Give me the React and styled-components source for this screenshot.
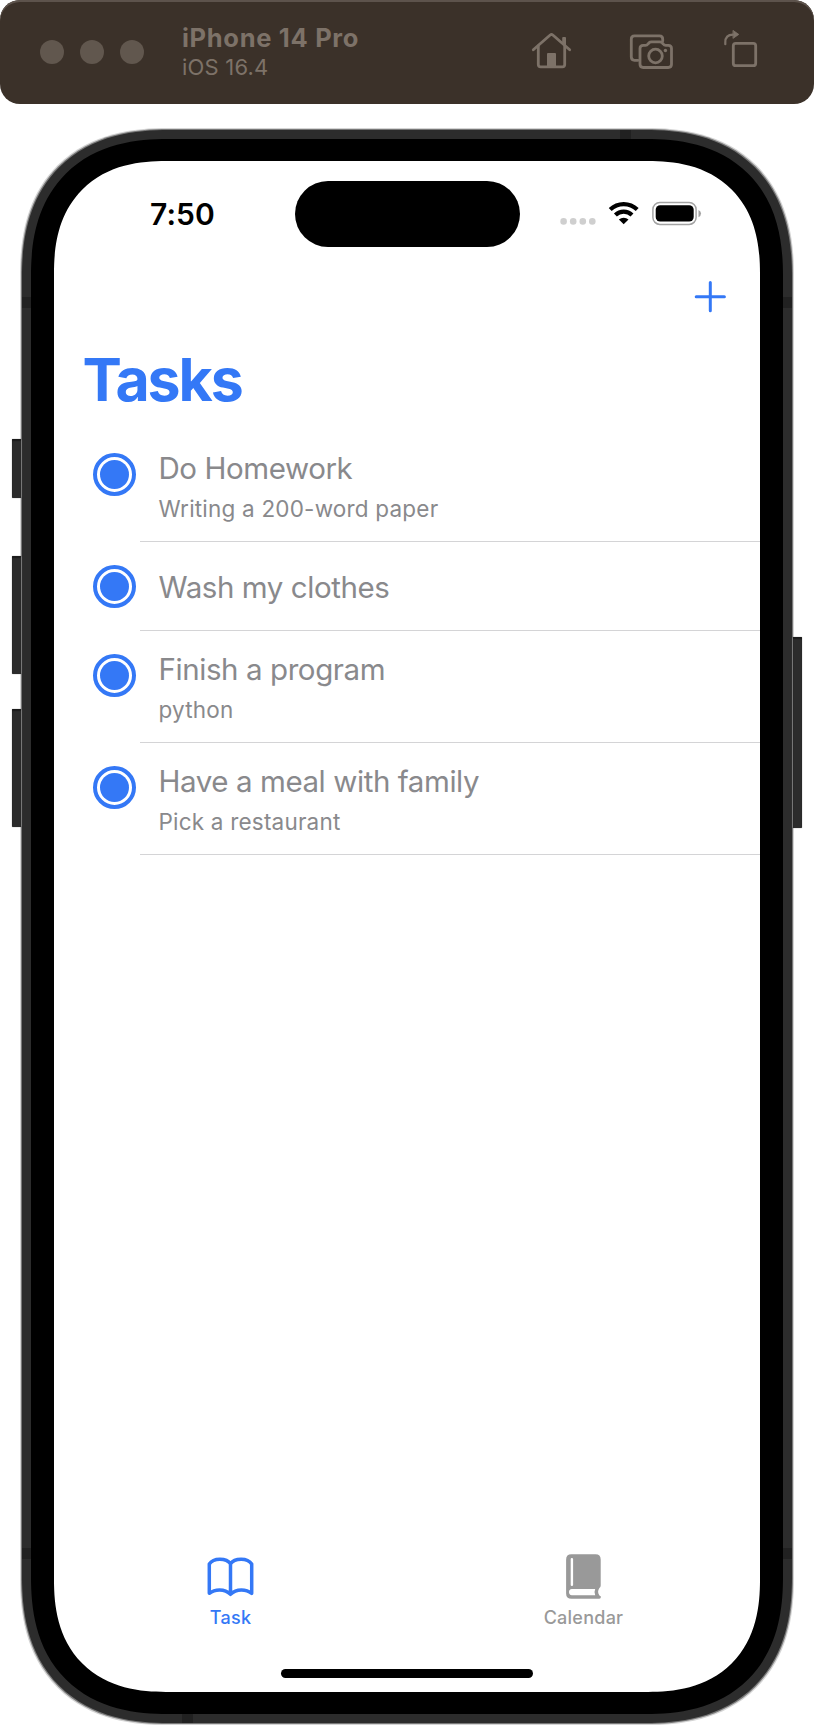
import React from "react";
import styled, { createGlobalStyle } from "styled-components";

const Global = createGlobalStyle`
  *, *::before, *::after { box-sizing: border-box; }
  body { margin: 0; background: #fff; font-family: Inter, "Liberation Sans", sans-serif; }
  svg { display: block; }
`;

const BLUE = "#3478f6";

const Page = styled.div`
  width: 814px;
  height: 1730px;
  overflow: hidden;
`;

const TitleBar = styled.header`
  display: flex;
  align-items: center;
  height: 104px;
  padding: 0 54px 0 40px;
  border-radius: 20px;
  background: #3b3129;
  box-shadow: inset 0 2px 0 #5d534c;
  color: #7d7268;
`;

const Lights = styled.div`
  display: flex;
  gap: 16px;
  margin-right: 38px;
`;

const Light = styled.span`
  width: 24px;
  height: 24px;
  border-radius: 50%;
  background: #61574e;
`;

const Device = styled.div`
  flex: 1;
  padding-top: 3px;
  white-space: nowrap;
`;

const DeviceName = styled.div`
  font-size: 25.5px;
  font-weight: 700;
  line-height: 28px;
  letter-spacing: 0.68px;
`;

const DeviceOs = styled.div`
  font-size: 22px;
  line-height: 31px;
  letter-spacing: 0.2px;
`;

const Tools = styled.div`
  display: flex;
  align-items: center;
`;

/* Continuous (squircle) corners, with plain circular ones as the fallback. */
const Phone = styled.div`
  position: relative;
  width: 770px;
  height: 1593px;
  margin: 26px 0 0 22px;
  padding: 9px;
  border-radius: 128px;
  background: #2c2c2c;
  box-shadow: 0 0 0 1px #777, 0 0 0 2px #d4d4d4;

  @supports (corner-shape: superellipse(1.245)) {
    border-radius: 147px;
    corner-shape: superellipse(1.245);
  }
`;

const SideButton = styled.span`
  position: absolute;
  top: ${(p) => p.$top}px;
  height: ${(p) => p.$height}px;
  width: 10px;
  ${(p) => (p.$right ? "right: -10px;" : "left: -10px;")}
  border-radius: 1px;
  background: #2c2c2c;
  box-shadow: inset 0 2px 1px #1c1c1c, 0 0 1px #555;
  border-${(p) => (p.$right ? "left" : "right")}: 1px solid #777;
`;

const Antenna = styled.span`
  position: absolute;
  top: ${(p) => p.$top}px;
  left: ${(p) => p.$left}px;
  width: ${(p) => (p.$vertical ? 9 : 11)}px;
  height: ${(p) => (p.$vertical ? 11 : 9)}px;
  background: #212121;
`;

const Bezel = styled.div`
  height: 100%;
  padding: 22px 23px;
  border-radius: 119px;
  background: #000;

  @supports (corner-shape: superellipse(1.245)) {
    border-radius: 137px;
    corner-shape: superellipse(1.245);
  }
`;

const Screen = styled.main`
  display: flex;
  flex-direction: column;
  height: 100%;
  border-radius: 97px;
  background: #fff;
  overflow: hidden;

  @supports (corner-shape: superellipse(1.245)) {
    border-radius: 112px;
    corner-shape: superellipse(1.245);
  }
`;

const StatusBar = styled.div`
  display: grid;
  grid-template-columns: 240.5px 225px 240.5px;
  align-items: center;
  height: 66px;
  margin-top: 20px;
`;

const Clock = styled.time`
  padding-left: 16.5px;
  text-align: center;
  font-size: 30px;
  font-weight: 600;
  line-height: 66px;
  letter-spacing: 0.1px;
`;

const Island = styled.div`
  height: 66px;
  border-radius: 33px;
  background: #000;
`;

const StatusIcons = styled.div`
  padding: 0 0 2px 40.5px;
`;

const NavBar = styled.div`
  display: flex;
  justify-content: flex-end;
  padding: 33px 33px 0 0;
`;

const Title = styled.h1`
  margin: 32px 0 0 28.5px;
  font-size: 59px;
  font-weight: 700;
  line-height: 70px;
  letter-spacing: -2.1px;
  color: ${BLUE};
`;

const List = styled.ul`
  margin: 15px 0 0;
  padding: 0;
  list-style: none;
`;

const Row = styled.li`
  display: flex;
  height: ${(p) => (p.$single ? 89 : 112)}px;
`;

const Radio = styled.span`
  flex: none;
  display: grid;
  place-items: center;
  width: 43px;
  height: 43px;
  margin: 23px 4px 0 39px;
  border: 4px solid ${BLUE};
  border-radius: 50%;

  &::after {
    content: "";
    width: 29px;
    height: 29px;
    border-radius: 50%;
    background: ${BLUE};
  }
`;

const RowText = styled.div`
  flex: 1;
  display: flex;
  flex-direction: column;
  justify-content: center;
  padding: ${(p) => (p.$single ? "1px" : "5px")} 0 0 18.5px;
  border-bottom: 1px solid #d4d4d6;
  color: #89898c;
  line-height: 40px;
  white-space: nowrap;
`;

const TaskName = styled.div`
  font-size: 29.5px;
  letter-spacing: -0.42px;
`;

const TaskNote = styled.div`
  margin-top: 1px;
  font-size: 22.5px;
  letter-spacing: 0.2px;
`;

const TabBar = styled.nav`
  display: grid;
  grid-template-columns: 1fr 1fr;
  margin-top: auto;
`;

const Tab = styled.div`
  display: flex;
  flex-direction: column;
  align-items: center;
  color: ${(p) => (p.$active ? BLUE : "#999")};
`;

const TabLabel = styled.span`
  margin-top: 6px;
  font-size: 18px;
  font-weight: 500;
  line-height: 24px;
  letter-spacing: 0.25px;
`;

const HomeIndicator = styled.div`
  width: 252px;
  height: 9px;
  margin: 39px auto 14px;
  border-radius: 5px;
  background: #000;
`;

const ToolIcons = () => (
  <svg width="234" height="50" viewBox="526 26 234 50" fill="none" stroke="currentColor" strokeWidth="2.8" strokeLinecap="round" strokeLinejoin="round">
    <path d="M533.3 48.8 550.2 34Q551.5 33 552.8 34L569.7 48.8" />
    <path d="M538.3 45V63.5Q538.3 65.8 540.6 65.8H562.4Q564.7 65.8 564.7 63.5V45" />
    <path d="M547 66V53Q547 52 548 52H555Q556 52 556 53V66Z" fill="currentColor" stroke="none" />
    <path d="M562.2 43V37Q562.2 36 563.2 36H565Q566 36 566 37V46Z" fill="currentColor" stroke="none" />
    <path d="M638 59.3H634.5Q631.3 59.3 631.3 56.1V38Q631.3 34.8 634.5 34.8H659.5Q662.7 34.8 662.7 38V40" />
    <path d="M643.2 44.3H645.5Q647 44.3 648 43L649 41.8Q650 40.8 651.5 40.8H659.7Q661.2 40.8 662.2 41.8L663.2 43Q664.2 44.3 665.7 44.3H668.3Q671.5 44.3 671.5 47.5V63.3Q671.5 66.5 668.3 66.5H643.2Q640 66.5 640 63.3V47.5Q640 44.3 643.2 44.3Z" />
    <circle cx="655.5" cy="55" r="6.8" />
    <circle cx="665.4" cy="49.5" r="1.7" fill="currentColor" stroke="none" />
    <rect x="733.3" y="42.3" width="22.4" height="22.4" rx="2.5" />
    <path d="M725.3 43.2V41.5Q725.3 33.7 733 33.7" strokeWidth="2.2" />
    <path d="M733.3 29.6 738.8 33.4 733.3 37.2Z" fill="currentColor" strokeWidth="0.8" />
  </svg>
);

const StatusGlyphs = () => (
  <svg width="142" height="26" viewBox="560 200 142 26">
    <g fill="#cfcfcf">
      <circle cx="563.6" cy="221.4" r="3.3" />
      <circle cx="573.2" cy="221.4" r="3.3" />
      <circle cx="582.8" cy="221.4" r="3.3" />
      <circle cx="592.3" cy="221.4" r="3.3" />
    </g>
    <g fill="none" stroke="#000" strokeWidth="4.2">
      <path d="M610.2 209.6A19.5 19.5 0 0 1 637.2 209.6" />
      <path d="M615.4 215A12 12 0 0 1 632 215" />
    </g>
    <path d="M623.7 224.3 618.9 219.6A7 7 0 0 1 628.5 219.6Z" />
    <rect x="652.9" y="202.4" width="43.2" height="22" rx="7" fill="none" stroke="#a3a3a3" strokeWidth="1.5" />
    <rect x="655.7" y="205.2" width="38" height="16.4" rx="4.5" />
    <path d="M698.5 210V217.2Q701 216.2 701 213.6Q701 211 698.5 210Z" fill="#a3a3a3" />
  </svg>
);

const PlusIcon = () => (
  <svg width="33" height="33" viewBox="0 0 33 33" stroke={BLUE} strokeWidth="3" strokeLinecap="round">
    <path d="M16.3 2.6V30.8M2.2 16.7H30.4" />
  </svg>
);

const OpenBook = () => (
  <svg width="48" height="46" viewBox="206.5 1553.5 48 46" fill="none" stroke="currentColor" strokeWidth="3.5" strokeLinecap="round" strokeLinejoin="round">
    <path d="M230 1563.3C226 1557.3 213 1557 208.8 1563.5V1592.8C214 1588.6 224 1587.6 230 1593.8C236 1587.6 246 1588.6 251.2 1592.8V1563.5C247 1557 234 1557.3 230 1563.3V1593.5" />
  </svg>
);

const ClosedBook = () => (
  <svg width="36" height="46" viewBox="566 1554 36 46">
    <path fill="currentColor" fillRule="evenodd" d="M571.5 1554.3H595.5Q600.7 1554.3 600.7 1559.5V1585.5Q600.7 1587 599.4 1588Q596.8 1591.8 599.4 1595.4Q601.4 1596 600.8 1597.5Q600.5 1598.8 599 1598.8H571.5Q566.1 1598.8 566.1 1593.4V1559.7Q566.1 1554.3 571.5 1554.3ZM571.8 1558Q570.7 1558 570.7 1559.1V1585Q570.7 1586.1 571.9 1586.1Q573.1 1586.1 573.1 1585V1559.1Q573.1 1558 571.8 1558ZM571.8 1589Q569 1589.3 569 1592Q569 1595 571.8 1595.3H595.2Q593.8 1592 595.2 1589Z" />
  </svg>
);

const tasks = [
  { name: "Do Homework", note: "Writing a 200-word paper" },
  { name: "Wash my clothes" },
  { name: "Finish a program", note: "python" },
  { name: "Have a meal with family", note: "Pick a restaurant" },
];

export default function App() {
  return (
    <Page>
      <Global />
      <TitleBar>
        <Lights><Light /><Light /><Light /></Lights>
        <Device>
          <DeviceName>iPhone 14 Pro</DeviceName>
          <DeviceOs>iOS 16.4</DeviceOs>
        </Device>
        <Tools><ToolIcons /></Tools>
      </TitleBar>
      <Phone>
        <SideButton $top={309} $height={59} />
        <SideButton $top={426} $height={118} />
        <SideButton $top={579} $height={118} />
        <SideButton $top={507} $height={191} $right />
        <Antenna $left={0} $top={167} $vertical />
        <Antenna $left={761} $top={167} $vertical />
        <Antenna $left={0} $top={1418} $vertical />
        <Antenna $left={761} $top={1418} $vertical />
        <Antenna $left={598} $top={0} />
        <Antenna $left={160} $top={1584} />
        <Bezel>
          <Screen>
            <StatusBar>
              <Clock>7:50</Clock>
              <Island />
              <StatusIcons><StatusGlyphs /></StatusIcons>
            </StatusBar>
            <NavBar><PlusIcon /></NavBar>
            <Title>Tasks</Title>
            <List>
              {tasks.map((t) => (
                <Row key={t.name} $single={!t.note}>
                  <Radio />
                  <RowText $single={!t.note}>
                    <TaskName>{t.name}</TaskName>
                    {t.note && <TaskNote>{t.note}</TaskNote>}
                  </RowText>
                </Row>
              ))}
            </List>
            <TabBar>
              <Tab $active><OpenBook /><TabLabel>Task</TabLabel></Tab>
              <Tab><ClosedBook /><TabLabel>Calendar</TabLabel></Tab>
            </TabBar>
            <HomeIndicator />
          </Screen>
        </Bezel>
      </Phone>
    </Page>
  );
}
